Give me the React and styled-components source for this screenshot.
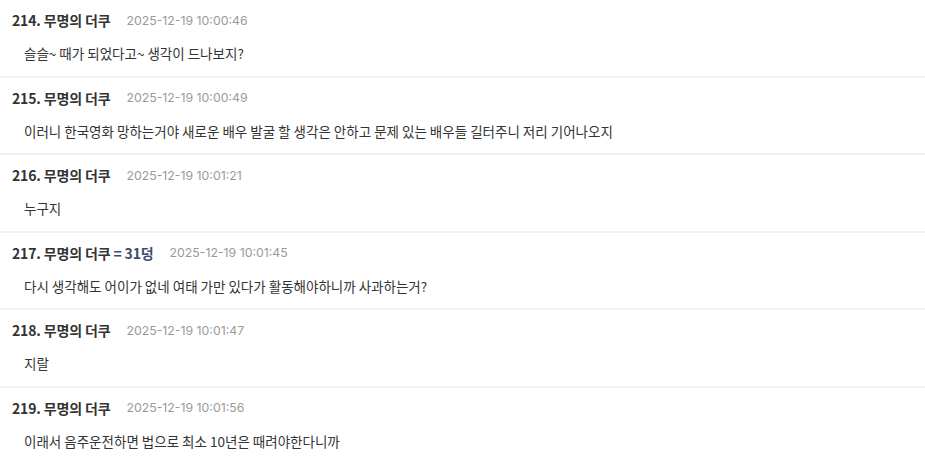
import React from "react";
import styled, { createGlobalStyle } from "styled-components";

const GlobalStyle = createGlobalStyle`
  body {
    margin: 0;
    background: #fff;
    font-family: "Noto Sans CJK KR", "Noto Sans", sans-serif;
  }
`;

const List = styled.div`
  display: flex;
  flex-direction: column;
  width: 925px;
`;

const Comment = styled.div`
  padding: 11px 0 13.5px;
  border-bottom: 2px solid #f1f1f1;
`;

const Header = styled.div`
  display: flex;
  align-items: center;
  gap: 16px;
  height: 18px;
  padding-left: 12px;
`;

const Author = styled.span`
  font-size: 14px;
  font-weight: 700;
  color: #333;
  letter-spacing: -0.15px;
`;

const Tag = styled.span`
  color: #3d4e6c;
`;

const Time = styled.span`
  font-family: "Inter", "Liberation Sans", sans-serif;
  font-size: 12.3px;
  color: #9a9a9a;
`;

const Body = styled.div`
  margin-top: 15px;
  padding-left: 24px;
  font-size: 13.5px;
  line-height: 18px;
  color: #333;
`;

const comments = [
  { no: 214, time: "2025-12-19 10:00:46", text: "슬슬~ 때가 되었다고~ 생각이 드나보지?" },
  {
    no: 215,
    time: "2025-12-19 10:00:49",
    text: "이러니 한국영화 망하는거야 새로운 배우 발굴 할 생각은 안하고 문제 있는 배우들 길터주니 저리 기어나오지",
  },
  { no: 216, time: "2025-12-19 10:01:21", text: "누구지" },
  {
    no: 217,
    time: "2025-12-19 10:01:45",
    tag: "= 31덩",
    text: "다시 생각해도 어이가 없네 여태 가만 있다가 활동해야하니까 사과하는거?",
  },
  { no: 218, time: "2025-12-19 10:01:47", text: "지랄" },
  { no: 219, time: "2025-12-19 10:01:56", text: "이래서 음주운전하면 법으로 최소 10년은 때려야한다니까" },
];

const App = () => {
  return (
    <>
      <GlobalStyle />
      <List>
        {comments.map((c) => (
          <Comment key={c.no}>
            <Header>
              <Author>
                {c.no}. 무명의 더쿠{c.tag && <Tag> {c.tag}</Tag>}
              </Author>
              <Time>{c.time}</Time>
            </Header>
            <Body>{c.text}</Body>
          </Comment>
        ))}
      </List>
    </>
  );
};

export default App;
